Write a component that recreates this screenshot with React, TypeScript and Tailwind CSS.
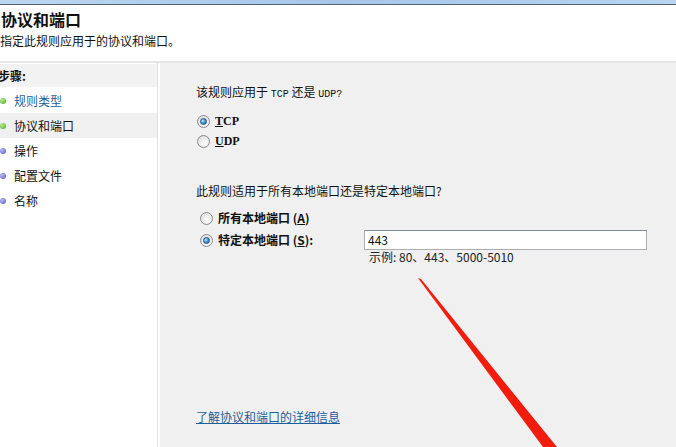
import React from "react";

const cjk = "[font-family:'Noto_Sans_CJK_SC','Noto_Sans',sans-serif]";
const mono = "[font-family:'Liberation_Mono','Noto_Sans_CJK_SC',monospace]";
const serif = "[font-family:'Liberation_Serif','Noto_Sans_CJK_SC',serif]";

function Radio({ checked }: { checked?: boolean }) {
  return (
    <span className="flex h-[13px] w-[13px] shrink-0 items-center justify-center rounded-full border border-[#8b8b8b] bg-[radial-gradient(circle_at_60%_65%,#ffffff,#d6d6d6)]">
      {checked && (
        <span className="h-[7px] w-[7px] rounded-full border border-[#1e4f80] bg-[radial-gradient(circle_at_35%_35%,#bfe3fb,#3c8fd0_55%,#1b5a98)]" />
      )}
    </span>
  );
}

function Step({
  label,
  color,
  active,
  current,
}: {
  label: string;
  color: "green" | "blue";
  active?: boolean;
  current?: boolean;
}) {
  return (
    <div
      className={
        "flex h-[25px] items-center " + (current ? "bg-[#f0f0f0]" : "")
      }
    >
      <span
        className={
          "h-[6px] w-[6px] rounded-full " +
          (color === "green"
            ? "bg-[radial-gradient(circle_at_35%_35%,#b6ec8f,#48a322)]"
            : "bg-[radial-gradient(circle_at_35%_35%,#b9b9f4,#5454c2)]")
        }
      />
      <span
        className={
          "ml-[8px] text-[12px] leading-[14px] " +
          (active ? "text-[#1f5f98]" : "text-[#111]")
        }
      >
        {label}
      </span>
    </div>
  );
}

export default function App() {
  return (
    <div
      className={
        "relative h-[447px] w-[676px] overflow-hidden bg-white text-[#111] " +
        cjk
      }
    >
      {/* window frame strip */}
      <div className="h-[4px] bg-gradient-to-r from-[#bcd6f0] via-[#a6c7eb] to-[#b8d4f1]" />
      <div className="h-[1px] bg-[#55626d]" />

      {/* page header */}
      <div className="h-[56px] bg-white pl-[1px] pt-[4px]">
        <div className="text-[16px] font-bold leading-[20px]">协议和端口</div>
        <div className="ml-[-1px] mt-[5px] text-[12px] leading-[14px]">
          指定此规则应用于的协议和端口。
        </div>
      </div>
      <div className="h-[2px] bg-[#e6e6e6]" />

      <div className="flex h-[384px]">
        {/* steps list */}
        <div className="w-[157px] bg-white pt-[1px]">
          <div className="flex h-[23px] items-center bg-[#f2f2f2]">
            <span className="ml-[-2px] text-[12px] font-bold leading-[14px]">
              步骤:
            </span>
          </div>
          <div className="pt-[1px]">
            <Step label="规则类型" color="green" active />
            <Step label="协议和端口" color="green" current />
            <Step label="操作" color="blue" />
            <Step label="配置文件" color="blue" />
            <Step label="名称" color="blue" />
          </div>
        </div>
        <div className="w-[1px] bg-[#e2e2e2]" />
        <div className="w-[2px] bg-white" />

        {/* wizard page */}
        <div className="flex-1 bg-[#f0f0f0] pl-[36px] pt-[22px]">
          <div className="text-[12px] leading-[14px]">
            该规则应用于 <span className={mono + " text-[10px]"}>TCP</span> 还是{" "}
            <span className={mono + " text-[10px]"}>UDP?</span>
          </div>

          <div className="ml-[1px] mt-[9px] flex h-[20px] items-center">
            <Radio checked />
            <span className={"ml-[5px] text-[12px] font-bold leading-[14px] " + serif}>
              <span className="underline">T</span>CP
            </span>
          </div>
          <div className="ml-[1px] flex h-[20px] items-center">
            <Radio />
            <span className={"ml-[5px] text-[12px] font-bold leading-[14px] " + serif}>
              <span className="underline">U</span>DP
            </span>
          </div>

          <div className="mt-[33px] text-[12px] leading-[14px]">
            此规则适用于所有本地端口还是特定本地端口?
          </div>

          <div className="ml-[4px] mt-[10px] flex h-[20px] items-center">
            <Radio />
            <span className="ml-[5px] text-[12px] font-bold leading-[14px]">
              所有本地端口 (<span className="underline">A</span>)
            </span>
          </div>
          <div className="ml-[4px] mt-[1px] flex h-[22px] items-center">
            <div className="flex w-[164px] items-center">
              <Radio checked />
              <span className="ml-[5px] text-[12px] font-bold leading-[14px]">
                特定本地端口 (<span className="underline">S</span>):
              </span>
            </div>
            <div className="flex h-[20px] w-[283px] items-center border border-[#abadb3] border-t-[#7f8d9b] bg-white pl-[3px] text-[12px] leading-[14px]">
              443
            </div>
          </div>
          <div className="ml-[173px] mt-[-1px] text-[12px] leading-[14px] text-[#222]">
            示例: 80、443、5000-5010
          </div>

          <div className="mt-[146px] text-[12px] leading-[14px] text-[#1c5e9c] underline">
            了解协议和端口的详细信息
          </div>
        </div>
      </div>

      {/* annotation stroke */}
      <svg
        className="pointer-events-none absolute left-0 top-0"
        width="676"
        height="447"
        viewBox="0 0 676 447"
      >
        <polygon points="418,278 421,279 557,447 543,447" fill="#f01d0f" />
      </svg>
    </div>
  );
}
